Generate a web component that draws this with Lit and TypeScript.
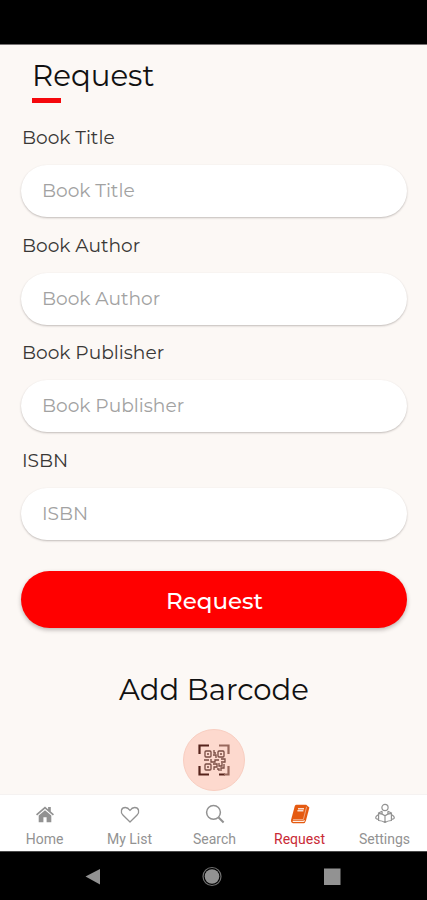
import { LitElement, html, css, svg } from "lit";
import { customElement } from "lit/decorators.js";

const home = svg`<path d="M2 11.2 11 3.600l3.100 2.600V4h2.700v4.500l3.200 2.700-1.100 1.200L11 5.800l-7.900 6.600z"/><path d="M4.700 12.400 11 7.200l6.300 5.200V19.300h-4.700v-5h-3.200v5H4.700z"/>`;
const heart = svg`<path d="M11 19 3.900 12C1.200 9.300 2 4.500 6.300 4.500c2.500 0 3.900 1.800 4.700 3 .8-1.200 2.200-3 4.700-3 4.300 0 5.100 4.800 2.400 7.500z" fill="none" stroke="currentColor" stroke-width="1.300" stroke-linejoin="round"/>`;
const search = svg`<g fill="none" stroke="currentColor"><circle cx="9.500" cy="9.300" r="6.900" stroke-width="1.500"/><path d="m14.600 14.500 5 5" stroke-width="2.100"/></g>`;
const book = svg`<path fill="#e55a10" d="M7.500 1.700h9.700l3.200 2.900-3.400 12.900q-.8 2.700-2.400 2.700H4q-2.500-.5-1.900-3.400L5.800 3q.5-1.200 1.700-1.300z"/><g fill="none" stroke="#fff"><path d="M17.600 3.800l-3.200 12.700H4.100" stroke-width=".7" opacity=".65"/><path d="M3.700 18.400h10.700l1.300-1" stroke-width="1.200" opacity=".9"/><path d="M9 5.800h6M8.400 7.800h6" stroke-width="1.500" opacity=".8"/></g>`;
const reader = svg`<g fill="none" stroke="currentColor" stroke-width="1.200" stroke-linejoin="round"><circle cx="11" cy="4.500" r="3.100"/><path d="M8.100 10.500V8.300M13.900 8.300v2.200M8.100 8.300 4 10.200M13.900 8.300l4.100 1.900M11 12.700Q8.500 10.500 4.600 10.300v7.200Q8.500 17.700 11 19.500q2.500-1.800 6.400-2v-7.200Q13.500 10.500 11 12.700zM11 12.700v6.800M4.600 11.600 2.300 13.200q-1.200 2 .2 2.600l2.100.5M17.400 11.600l2.300 1.600q1.200 2-.2 2.600l-2.100.5"/></g>`;

const tabs = [
  { label: "Home", icon: home, cls: "" },
  { label: "My List", icon: heart, cls: "" },
  { label: "Search", icon: search, cls: "" },
  { label: "Request", icon: book, cls: "active" },
  { label: "Settings", icon: reader, cls: "" },
];

@customElement("app-root")
export class AppRoot extends LitElement {
  static styles = css`
    :host {
      display: flex;
      flex-direction: column;
      height: 900px;
      width: 100%;
      overflow: hidden;
      background: #fcf8f5;
      color: #111;
      font-family: Montserrat, Inter, sans-serif;
    }
    * { box-sizing: border-box; }
    .status { height: 45px; flex: none; background: #000; border-bottom: 1px solid #777374; }
    main { flex: 1; min-height: 0; padding: 12px 20px 0 21px; display: flex; flex-direction: column; }
    h1, h2 { margin: 0; font-weight: 400; white-space: nowrap; font-size: 29.1px; line-height: 38px; }
    h1 { margin-left: 11px; font-size: 29.3px; }
    .rule { flex: none; width: 29px; height: 5px; margin: 3px 0 0 11px; background: #f5080c; }
    .form { display: flex; flex-direction: column; padding-top: 22px; }
    .field { height: 107.7px; display: flex; flex-direction: column; }
    label { height: 40px; line-height: 26px; padding-left: 1px; font-size: 18.6px; color: #393735; }
    input {
      width: 100%; height: 52px; border: 0; outline: 0; border-radius: 26px;
      padding: 0 21px 1px; background: #fff; font: inherit; font-size: 18.6px;
      box-shadow: 0 1px 2px rgba(60, 50, 45, 0.3);
    }
    input::placeholder { color: #a2a2a2; opacity: 1; }
    .submit {
      flex: none; height: 57px; margin-top: 15px; border: 0; border-radius: 29px; background: #f00; color: #fff;
      font: inherit; font-size: 23px; font-weight: 500; padding: 4px 0 0 1px;
      box-shadow: 0 2px 4px rgba(40, 30, 30, 0.3);
    }
    h2 { margin-top: 43px; text-align: center; }
    .scan {
      align-self: center; flex: none; width: 62px; height: 62px; margin-top: 20px; border-radius: 50%;
      background: #fdd9ce; border: 1px solid #f8cec1; display: grid; place-items: center;
    }
    nav { flex: none; height: 57px; background: #fff; border-top: 1px solid #f5f2f1; display: grid; grid-template-columns: repeat(5, 1fr); padding-left: 2px; }
    .tab { display: flex; flex-direction: column; align-items: center; padding-top: 8px; color: #929292; font: 14px/18px Roboto, sans-serif; }
    .tab svg { margin-bottom: 5px; flex: none; fill: currentColor; }
    .active { color: #c92a35; }
    .system { flex: none; height: 49px; background: #000; border-top: 1px solid #4a4a4a; padding-left: 83px; display: flex; }
    .system svg { display: block; }
  `;

  render() {
    return html`
      <div class="status"></div>
      <main>
        <h1>Request</h1>
        <div class="rule"></div>
        <div class="form">
          ${["Book Title", "Book Author", "Book Publisher", "ISBN"].map(
            (name) => html`<div class="field"><label>${name}</label><input placeholder=${name} aria-label=${name} /></div>`
          )}
        </div>
        <button class="submit">Request</button>
        <h2>Add Barcode</h2>
        <div class="scan">
          <svg width="32" height="32" viewBox="0 0 32 32" fill="none">
            <path d="M1.500 10V1.500H11M1.500 22v8.500H11M21 30.500h6" stroke="#56231b" stroke-width="2.200" />
            <path d="M21 1.500h9.500V10M30.500 22v8.500H26" stroke="#98685c" stroke-width="2.200" />
            <g stroke="#784c43" stroke-width="1.300">
              <rect x="7" y="7" width="6" height="6" rx="1" />
              <rect x="20" y="7" width="6" height="6" rx="1" />
              <rect x="7" y="20" width="6" height="6" rx="1" />
              <path d="M9 10h2M22 10h2M9 23h2M16 6v3h2M15 11h3v3M6 16h5M13 15v3h4v-2h4M23 15h4v3h-4M15 20h4v3h-3v3M21 19v3h3v-3M26 20v4h-3v3M19 25h2v2" />
            </g>
          </svg>
        </div>
      </main>
      <nav>
        ${tabs.map(
          (t) => html`<div class="tab ${t.cls}"><svg width="22" height="22" viewBox="0 0 22 22">${t.icon}</svg>${t.label}</div>`
        )}
      </nav>
      <div class="system">
        <svg width="260" height="48" viewBox="0 0 260 48" fill="#929292">
          <path d="M2.500 24.500 17 17v15.500z" />
          <circle cx="129" cy="24.500" r="9" fill="none" stroke="#707070" stroke-width="1.200" />
          <circle cx="129" cy="24.500" r="7.300" />
          <rect x="241" y="16.500" width="16.500" height="16.500" />
        </svg>
      </div>
    `;
  }
}
